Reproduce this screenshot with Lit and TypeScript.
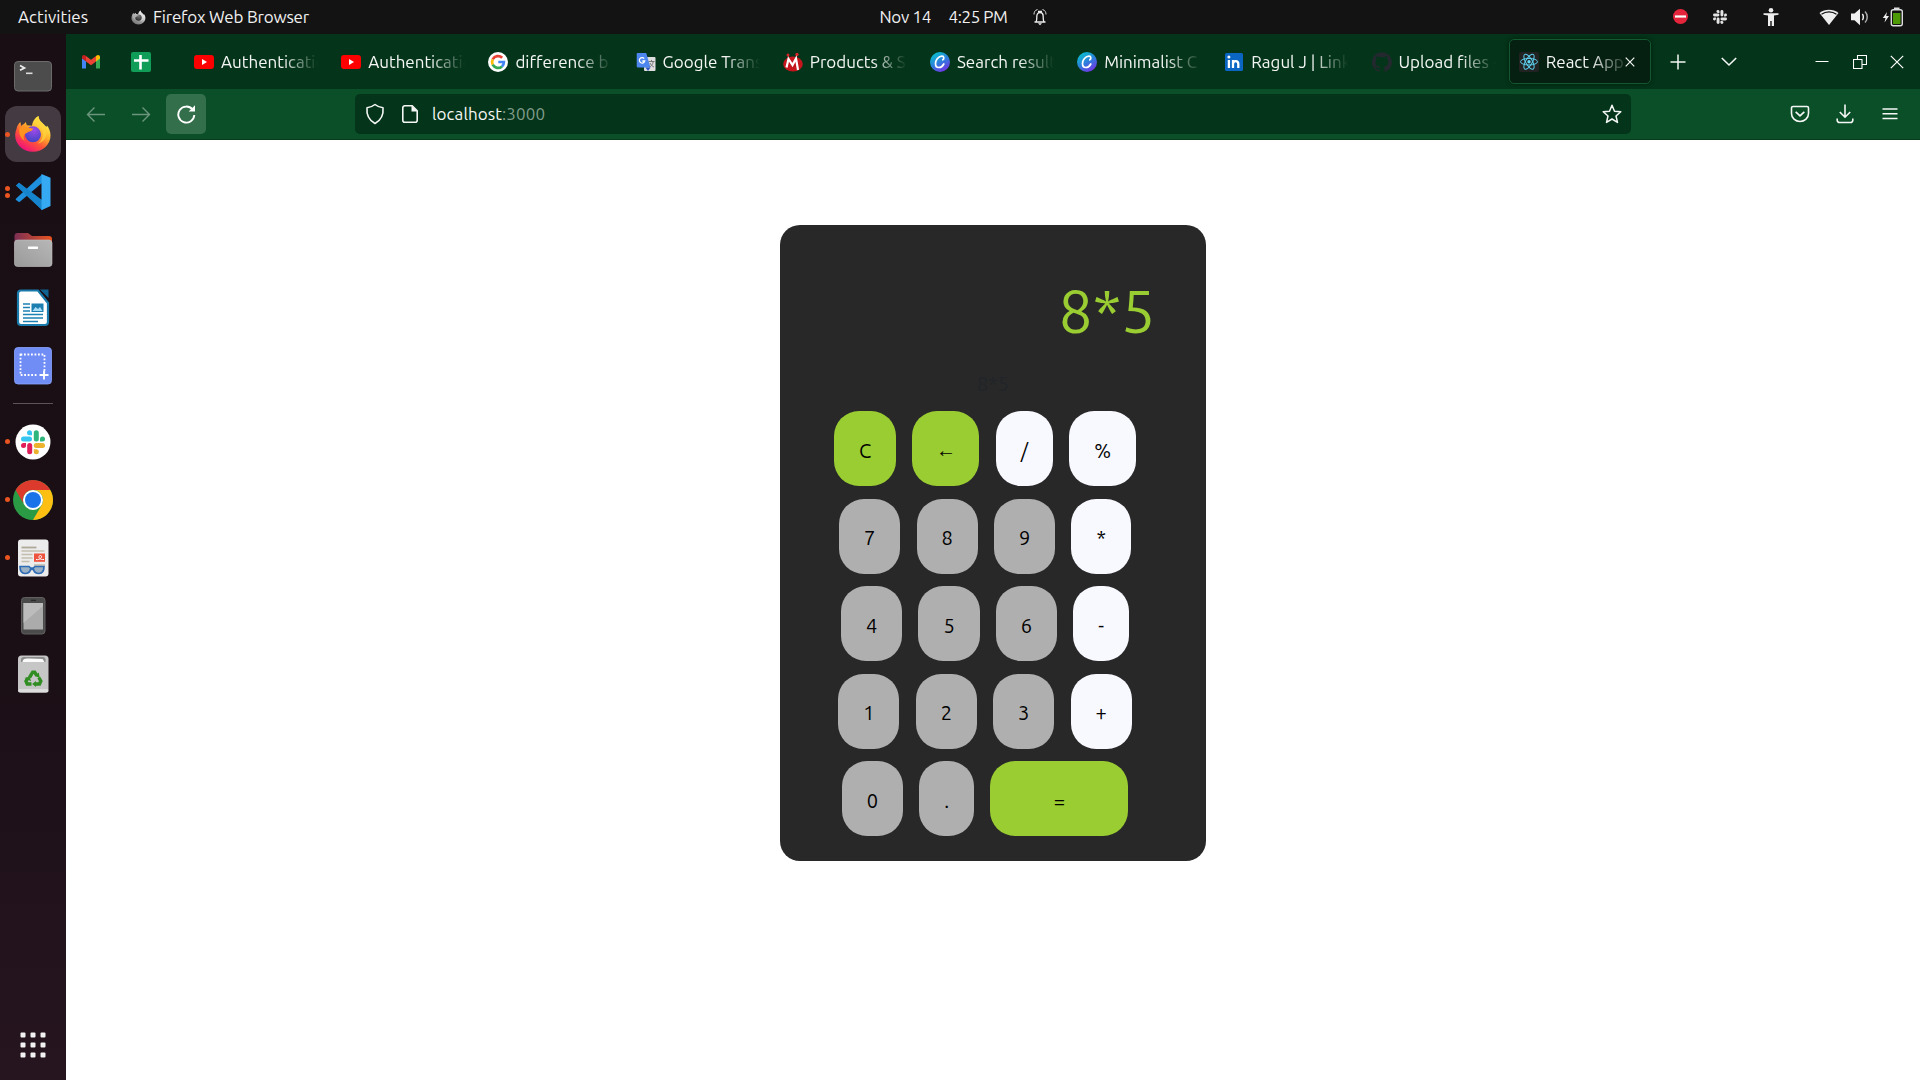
import { LitElement, html, svg, css } from "lit";
import { customElement, property, state } from "lit/decorators.js";
import { classMap } from "lit/directives/class-map.js";

/** Wraps drawing code in an inline SVG of the given size. */
const icon = (w: number, h: number, body: unknown) =>
  html`<svg width=${w} height=${h} viewBox="0 0 ${w} ${h}" fill="none">${body}</svg>`;

const slackShape = (a: string, b: string, c: string, d: string) => svg`
  <g fill=${a}><rect x="0" y="6.2" width="11" height="5" rx="2.5"/><path d="M11 5H8.5A2.5 2.5 0 1 1 11 2.5z"/></g>
  <g fill=${b}><rect x="12.8" y="0" width="5" height="11.2" rx="2.5"/><path d="M19 11.2V8.7A2.5 2.5 0 1 1 21.5 11.2z"/></g>
  <g fill=${c}><rect x="12.8" y="12.8" width="11.2" height="5" rx="2.5"/><path d="M12.8 19h2.5A2.5 2.5 0 1 1 12.8 21.5z"/></g>
  <g fill=${d}><rect x="6.2" y="12.8" width="5" height="11.2" rx="2.5"/><path d="M5 12.8v2.5A2.5 2.5 0 1 1 2.5 12.8z"/></g>`;

const foxBody = (grey: boolean) => svg`
  <defs>
    <linearGradient id="fxa" x1="28" y1="5" x2="9" y2="34" gradientUnits="userSpaceOnUse">
      <stop offset="0" stop-color=${grey ? "#fff" : "#fff44f"}/><stop offset=".35" stop-color=${grey ? "#ccc" : "#ffb02a"}/>
      <stop offset=".65" stop-color=${grey ? "#999" : "#ff5338"}/><stop offset="1" stop-color=${grey ? "#777" : "#f0127a"}/>
    </linearGradient>
    <radialGradient id="fxb" cx="20" cy="15" r="11" gradientUnits="userSpaceOnUse">
      <stop offset="0" stop-color=${grey ? "#777" : "#a04ae8"}/><stop offset="1" stop-color=${grey ? "#333" : "#4a44c8"}/>
    </radialGradient>
  </defs>
  <path fill="url(#fxa)" d="M2.5 14C3 11 4.500 8.500 6.500 7l.6 4C8 10 9 9.300 10 9l1.800-2 1 3.200 5.200.6C18.500 7 20.500 3 24.500 1c.3 2.500 1 4.500 3.500 6.500l4.500 4.500.5-1.500c2 2.500 3.500 6 3.500 10C36.500 29.500 29 36.800 19 36.800S1.200 29.500 1.200 20.500c0-2.300.4-4.500 1.300-6.500z"/>
  <circle cx="19" cy="19.300" r="8" fill="url(#fxb)"/>
  <path fill=${grey ? "#aaa" : "#ff9420"} d="M5.500 13.200C8 11.200 11 11 13 12.600l5.800.9c.4 1.300-1.500 2.700-4.200 3.200-1.300 1-3 1.600-4 2.600-1.500 2-1.300 4.300.4 6.700C6 23 4.500 17.500 5.500 13.200z"/>
  <path fill=${grey ? "#ddd" : "#ffd23c"} opacity=".75" d="M24.500 1c-3 2-4.300 5.500-3.500 8.500 3.500.7 7 3.500 7.800 8 .7 5-1.800 9-5.300 11 6-1 9.800-6 9-13-1-6-7.500-8-8-14.500z"/>`;

const dockIcons: Record<string, unknown> = {
  terminal: icon(40, 40, svg`<rect x="1.500" y="5.500" width="37" height="29.500" rx="3.500" fill="#4c4c4c" stroke="#6b6b6b"/>
    <path d="m7 9.500 4.500 2.400L7 14.300" stroke="#eee" stroke-width="1.700"/><path d="M13 17.300h6.500" stroke="#ddd" stroke-width="1.600"/>`),
  firefox: icon(38, 38, foxBody(false)),
  code: icon(38, 38, svg`<path d="M2 12.500 5 9.800 28 29v8z" fill="#1577b8"/><path d="M1.600 26 28 1.500V10L5.300 29.300 2 27z" fill="#1e8fdc"/>
    <path d="M2 12.500 5 9.800 28 27v10z" fill="#1684cc"/><path d="m27.500 1 9 3.800V33l-9 4.200z" fill="#35a9f2"/>`),
  files: icon(40, 40, svg`<defs><linearGradient id="fl" x1="0" x2="1"><stop stop-color="#7c2f55"/><stop offset="1" stop-color="#e95420"/></linearGradient>
    <linearGradient id="fg" x1="0" y1="1" x2="1" y2="0"><stop stop-color="#9a9a9a"/><stop offset="1" stop-color="#b7b7b7"/></linearGradient></defs>
    <path d="M1.500 6a3 3 0 0 1 3-3h10.500l4 3H36a3 3 0 0 1 3 3v12H1.500z" fill="url(#fl)"/>
    <rect x="1.500" y="10" width="37.500" height="26.500" rx="3" fill="url(#fg)" stroke="#c2c2c2" stroke-width=".6"/><rect x="15" y="16.500" width="10" height="2.400" rx=".6" fill="#fff"/>`),
  writer: icon(40, 40, svg`<path d="M8 2.500h17L35 15v19a3 3 0 0 1-3 3H8a3 3 0 0 1-3-3V5.500a3 3 0 0 1 3-3z" fill="#fff" stroke="#187bab" stroke-width="2.200"/>
    <path d="M27 1.500h8.500V10z" fill="#0f6390"/>
    <path d="M10 16h7M10 19.500h7M10 23h7M10 26.500h20M10 30h20M10 33.500h15" stroke="#1d82b3" stroke-width="1.600"/><rect x="18.500" y="15.500" width="12" height="8.500" fill="#1c7fb0"/>
    <path d="m19.500 23 3-4 2.500 2 2-2 2.500 4z" fill="#a6dbf5"/>`),
  shot: icon(40, 40, svg`<rect x="1.500" y="1.500" width="37" height="36.500" rx="3.500" fill="#6f8df5" stroke="#8aa3ff" stroke-width=".8"/>
    <rect x="7.500" y="8.500" width="24" height="20.500" stroke="#fff" stroke-width="1.800" stroke-dasharray="1.800 1.700"/><path d="M25 29h12" stroke="#6f8df5" stroke-width="4"/>
    <path d="M31 24.500v9M26.500 29h9" stroke="#fff" stroke-width="1.800"/>`),
  slack: icon(36, 36, svg`<circle cx="18" cy="18" r="17.500" fill="#fff"/><g transform="translate(6 6.300)">${slackShape("#36c5f0", "#2eb67d", "#ecb22e", "#e01e5a")}</g>`),
  chrome: icon(40, 40, svg`<circle cx="20" cy="20" r="20" fill="#2b9a44"/><path d="M2.700 10A20 20 0 0 1 37.300 10H20a10 10 0 0 0-8.700 15z" fill="#dc3a2c"/>
    <path d="M37.300 10A20 20 0 0 1 20 40l8.700-15A10 10 0 0 0 20 10z" fill="#fdbf12"/><circle cx="20" cy="20" r="10" fill="#fff"/><circle cx="20" cy="20" r="8" fill="#1a73e8"/>`),
  reader: icon(40, 40, svg`<rect x="5" y="1.500" width="30.500" height="37" rx="3" fill="#ececec"/><path d="M8.500 9.500h15" stroke="#b0a99a" stroke-width="1.800"/>
    <path d="M8.500 13h23M8.500 16.500h11M8.500 20h11M8.500 23.500h8M21 27h11" stroke="#c4bdad" stroke-width="1.400"/><rect x="21" y="15.500" width="11" height="8.300" fill="#ee5340"/>
    <path d="M23 21.500c5 1 7-4 4.500-4s-2.500 4.500 3.500 4" stroke="#fff"/>
    <path d="M7 28.500h9l1.500 1.500h3l1.500-1.500h9c0 5-1.500 7-5 7s-5-2-5.500-4h-3c-.5 2-2 4-5.500 4s-5-2-5-7z" fill="#9ab0c4" stroke="#2f6cb5" stroke-width="1.700"/>`),
  phone: icon(40, 40, svg`<rect x="8.500" y="1.500" width="23.500" height="36.500" rx="3" fill="#4a4a4a" stroke="#606060"/><rect x="10.500" y="7" width="19.500" height="26.500" fill="#ababab"/>
    <path d="M10.500 27 30 10v-3H10.500z" fill="#bcbcbc"/><path d="M18 4.300h5" stroke="#222"/>`),
  trash: icon(40, 40, svg`<rect x="5" y="1.500" width="30.500" height="37" rx="3.500" fill="#c6c6c6"/><rect x="5" y="35" width="30.500" height="3.500" rx="1.700" fill="#dcdcdc"/>
    <path d="M8 8V5.500A2.500 2.500 0 0 1 10.500 3H30a2.500 2.500 0 0 1 2.500 2.500V8z" fill="#8d8d8d"/><path d="M9.500 8c0-3 3-4 6-3.500l14 .5 2 3z" fill="#fafafa"/>
    <g fill="none" stroke="#2f8d22" stroke-width="3.400"><path d="m16.500 23.500 3.200-5.300h2l2 3.300"/><path d="m25.800 23.500 2 3.500-1.300 3h-4.500"/><path d="M18.500 30h-4.300l-1.200-2.800 1.700-2.700"/></g>
    <g fill="#2f8d22"><path d="m25.800 18.500 1 5.500-5-2z"/><path d="m23 27 .1 6-4-3z"/><path d="m11.500 24 5-1.500 1.500 4.700z"/></g>`),
  apps: icon(40, 40, svg`<g fill="#f2f2f2">${[7.5, 17.5, 27.5].map((y) => [7.5, 17.5, 27.5].map((x) => svg`<rect x=${x} y=${y} width="5" height="5" rx="1"/>`))}</g>`),
};

const canva = icon(20, 20, svg`<defs><linearGradient id="cv" x1=".2" y1="0" x2=".8" y2="1"><stop stop-color="#06c4cc"/><stop offset=".5" stop-color="#2d7fdc"/><stop offset="1" stop-color="#7d2ae7"/></linearGradient></defs>
  <circle cx="10" cy="10" r="10" fill="url(#cv)"/><path d="M12.800 7.800c1.400-.6 1.600-3.600-.8-3.600C8.500 4.200 5.500 8 5.500 11.500c0 2.500 1.300 4 3.300 4 2.200 0 4-1.500 5-3.500" stroke="#fff" stroke-width="1.700" stroke-linecap="round"/>`);

const youtube = icon(20, 20, svg`<rect x="0" y="3" width="20" height="14" rx="3" fill="#f00"/><path d="m8 7 5 3-5 3z" fill="#fff"/>`);

const favicons: Record<string, unknown> = {
  gmail: icon(20, 20, svg`<path d="M1 5v11.500h4V9z" fill="#4285f4"/><path d="M19 5v11.500h-4V9z" fill="#34a853"/><path d="M1 5c0-2 2-2.600 3.400-1.500L5 4v5.500L1 6.500z" fill="#c5221f"/>
    <path d="M19 5c0-2-2-2.600-3.400-1.500L15 4v5.500l4-3z" fill="#fbbc04"/><path d="M5 4v5.500l5 3.800 5-3.800V4l-5 3.800z" fill="#ea4335"/>`),
  sheets: icon(20, 20, svg`<rect width="20" height="20" rx="2" fill="#0f9d58"/><path d="M9.500 3v14.500M3 8.500h14.500" stroke="#fff" stroke-width="2.600"/>`),
  youtube,
  google: icon(20, 20, svg`<circle cx="10" cy="10" r="10" fill="#fff"/><g stroke-width="2.700"><path d="M14.200 5.800A6 6 0 0 0 4.700 7.300" stroke="#ea4335"/><path d="M4.700 7.300a6 6 0 0 0 0 5.400" stroke="#fbbc05"/>
    <path d="M4.700 12.700a6 6 0 0 0 9.300 1.700" stroke="#34a853"/><path d="M14 14.400a6 6 0 0 0 1.900-4.400H10.300" stroke="#4285f4"/></g>`),
  translate: icon(20, 20, svg`<rect x="8" y="5" width="11.500" height="14" rx="1" fill="#dedede"/><path d="M1.500 1h8.700l4.300 14.500H2A1.300 1.300 0 0 1 .7 14.200V2A1 1 0 0 1 1.500 1z" fill="#4c86ee"/>
    <path d="m9.500 15.500h5L12 19z" fill="#2a56c6"/><path d="M8.200 6.700A2.700 2.700 0 1 0 8.700 9H6.300" stroke="#fff" stroke-width="1.300"/><path d="M12.500 9.500h6M15.500 8v1.500M17.300 9.500c-.5 3-2.500 5-4 5.700M14 11c1 2 2.500 3.500 4 4" stroke="#777"/>`),
  products: icon(20, 20, svg`<circle cx="5" cy="3" r="1.500" fill="#d8232a"/><circle cx="14" cy="2.500" r="1.700" fill="#d8232a"/><path d="M5 3.500 7 7M14 3l-2 4" stroke="#c22" />
    <ellipse cx="10" cy="12" rx="9.800" ry="7.400" fill="#c4161c"/><path d="M3.500 15.500 5.500 7l4 6 3.500-6.500L15 18" stroke="#fff" stroke-width="2.200"/>`),
  canva,
  linkedin: icon(20, 20, svg`<rect x="1" y="1" width="18" height="18" rx="1.500" fill="#0a66c2"/><path d="M4.900 8v8M9 16V8m0 4c0-3.800 5.300-3.800 5.300 0v4" stroke="#fff" stroke-width="2.300"/><circle cx="4.900" cy="5" r="1.500" fill="#fff"/>`),
  github: icon(20, 20, svg`<path fill="#24292f" d="M10 .2a10 10 0 0 0-3.200 19.500c.5.1.7-.2.7-.5v-1.700c-2.800.6-3.400-1.300-3.400-1.300-.4-1.200-1.100-1.500-1.100-1.500-.9-.6.1-.6.1-.6 1 .1 1.500 1 1.500 1 .9 1.600 2.400 1.100 2.900.9.1-.7.4-1.100.6-1.400-2.200-.2-4.500-1.100-4.500-4.900 0-1.100.4-2 1-2.700-.1-.2-.4-1.200.1-2.600 0 0 .8-.3 2.700 1a9.400 9.400 0 0 1 5 0c1.900-1.300 2.700-1 2.700-1 .5 1.400.2 2.400.1 2.600.6.700 1 1.600 1 2.700 0 3.800-2.300 4.700-4.500 4.900.4.300.7.900.7 1.900v2.700c0 .3.200.6.700.5A10 10 0 0 0 10 .2z"/>`),
  react: icon(20, 20, svg`<rect width="20" height="20" rx="2" fill="#222"/><g stroke="#5ccfee" stroke-width="1"><ellipse cx="10" cy="9.700" rx="8.500" ry="3.300"/><ellipse cx="10" cy="9.700" rx="8.500" ry="3.300" transform="rotate(60 10 9.700)"/><ellipse cx="10" cy="9.700" rx="8.500" ry="3.300" transform="rotate(120 10 9.700)"/></g><circle cx="10" cy="9.700" r="1.700" fill="#61dafb"/>`),
};

@customElement("system-bar")
class SystemBar extends LitElement {
  static styles = css`
    :host { display: flex; height: 34px; background: #131313; color: #f0f0f0; font-size: 17px; line-height: 34px; align-items: center; }
    svg { display: block; flex: none; }
    .left { flex: 1 1 0; display: flex; align-items: center; padding-left: 18px; }
    .activities { width: 113px; letter-spacing: 0.05px; }
    .app { margin-left: 7px; letter-spacing: -0.2px; }
    .clock { display: flex; align-items: center; white-space: pre; }
    .date { width: 69px; letter-spacing: -0.3px; }
    .time { width: 84px; letter-spacing: -0.4px; }
    .status { flex: 1 1 0; display: flex; align-items: center; justify-content: flex-end; padding-right: 12px; }
    .cell { width: 30px; height: 34px; display: flex; align-items: center; justify-content: center; }
    .cell.dnd { margin-right: 10px; }
    .cell.slack { margin-right: 21px; }
    .cell.access { margin-right: 28px; }
    .cell.volume { margin: 0 3px 0 1px; }
  `;
  render() {
    return html`
      <div class="left">
        <span class="activities">Activities</span>
        <svg width="15" height="15" viewBox="0 0 38 38">${foxBody(true)}</svg>
        <span class="app">Firefox Web Browser</span>
      </div>
      <div class="clock">
        <span class="date">Nov 14</span><span class="time">4:25 PM</span>
        ${icon(14, 18, svg`<path d="M1.500 14h11M3 14c1-2 .8-3 .8-5.500C3.800 6 5 4.500 7 4.500s3.200 1.500 3.200 4c0 2.500-.2 3.500.8 5.500" stroke="#eee" stroke-width="1.300"/><path d="M5 15.300h4L7 17.300zM5 2.800h4v1.500H5z" fill="#eee"/><path d="M4.500 1.500C2 2.200 1 4 1 6.500M9.500 1.500C12 2.200 13 4 13 6.500" stroke="#ddd"/>`)}
      </div>
      <div class="status">
        <span class="cell dnd">${icon(16, 16, svg`<circle cx="8.500" cy="7.500" r="7.500" fill="#e5253c"/><path d="M3 7.500h11" stroke="#fff" stroke-width="2.200"/>`)}</span>
        <span class="cell slack"><svg width="14" height="14" viewBox="0 0 24 24">${slackShape("#e4e4e4", "#e4e4e4", "#e4e4e4", "#e4e4e4")}</svg></span>
        <span class="cell access">${icon(16, 18, svg`<circle cx="8" cy="2.300" r="2.300" fill="#eee"/><path d="M.5 5.200h15v1.600L11 7.500V18H8.700v-5H7.300v5H5V7.500L.5 6.800z" fill="#eee"/>`)}</span>
        <span class="cell">${icon(20, 18, svg`<path d="M10 17 .5 5C6 .7 14 .7 19.500 5z" fill="#eee"/><path d="M2.500 6.300C7 3 13 3 17.500 6.300" stroke="#131313" stroke-width="1.300"/>`)}</span>
        <span class="cell volume">${icon(20, 18, svg`<path d="M1 5.500h3.500L10 .8v16.400l-5.500-5H1z" fill="#eee"/><path d="M12.300 6c1.400 1.500 1.400 4.500 0 6" stroke="#eee" stroke-width="1.500"/><path d="M15 3.500c3 3 3 8 0 11" stroke="#aaa" stroke-width="1.500"/>`)}</span>
        <span class="cell">${icon(22, 20, svg`<path d="M5 5 .8 11h2.700L2.500 15.500 7 9H4.200z" fill="#eee"/><rect x="9.300" y="2.700" width="11" height="16" rx="2" stroke="#ddd" stroke-width="1.400"/><path d="M12 .5h5.500v1.500H12z" fill="#ddd"/><path d="M11 6h7.500v11H11z" fill="#4e9a06"/>`)}</span>
      </div>`;
  }
}

interface DockItem { id: string; dots: number; active?: boolean }

@customElement("app-dock")
class AppDock extends LitElement {
  static styles = css`
    :host { display: flex; flex-direction: column; align-items: center; gap: 2px; width: 66px; flex: none; box-sizing: border-box; padding: 14px 0 7px; background: linear-gradient(#190e14, #1b0f16 60%, #26151f); }
    svg { display: block; }
    .item { width: 56px; height: 56px; border-radius: 12px; display: flex; align-items: center; justify-content: center; position: relative; }
    .active { background: #443a41; }
    .dots { position: absolute; left: 0; top: 0; height: 56px; display: flex; flex-direction: column; justify-content: center; gap: 2.500px; }
    .dot { width: 5px; height: 5px; border-radius: 50%; background: #e95420; }
    .rule { width: 40px; height: 1px; background: #5c5358; margin: 7px 0 7.500px; }
    .grow { flex: 1; }
  `;
  pinned: DockItem[] = [
    { id: "terminal", dots: 0 }, { id: "firefox", dots: 1, active: true }, { id: "code", dots: 2 },
    { id: "files", dots: 0 }, { id: "writer", dots: 0 }, { id: "shot", dots: 0 },
  ];
  running: DockItem[] = [
    { id: "slack", dots: 1 }, { id: "chrome", dots: 1 }, { id: "reader", dots: 1 }, { id: "phone", dots: 0 }, { id: "trash", dots: 0 },
  ];
  item(i: DockItem) {
    return html`<div class=${classMap({ item: true, active: !!i.active })}>
      <span class="dots">${Array.from({ length: i.dots }, () => html`<i class="dot"></i>`)}</span>${dockIcons[i.id]}</div>`;
  }
  render() {
    return html`${this.pinned.map((i) => this.item(i))}<div class="rule"></div>${this.running.map((i) => this.item(i))}
      <div class="grow"></div>${this.item({ id: "apps", dots: 0 })}`;
  }
}

@customElement("browser-chrome")
class BrowserChrome extends LitElement {
  static styles = css`
    :host { display: block; color: #f4f7f5; font-size: 17px; }
    svg { display: block; flex: none; }
    .tabs { height: 55px; background: #043419; display: flex; align-items: center; }
    .pinned { width: 50px; display: flex; justify-content: center; flex: none; }
    .list { display: flex; margin-left: 18px; }
    .tab { width: 147.200px; height: 45px; box-sizing: border-box; padding-left: 10px; display: flex; align-items: center; gap: 7px; flex: none; }
    .tab.on { width: 142px; padding-left: 9px; border: 1px solid #135831; border-radius: 5px; background: #051f11; box-shadow: 0 0 4px rgba(0, 0, 0, 0.4); }
    .label { width: 97px; overflow: hidden; white-space: nowrap; line-height: 28px; -webkit-mask-image: linear-gradient(to right, #000 62px, transparent 97px); mask-image: linear-gradient(to right, #000 62px, transparent 97px); }
    .on .label { width: 79px; -webkit-mask-image: linear-gradient(to right, #000 44px, transparent 84px); mask-image: linear-gradient(to right, #000 44px, transparent 84px); }
    .on .x { margin-left: -7px; }
    .cell { display: flex; align-items: center; justify-content: center; height: 55px; }
    .plus { width: 50px; margin-left: 2px; }
    .chev { width: 52px; }
    .controls { margin-left: auto; display: flex; padding-right: 4px; }
    .ctl { width: 37.500px; }
    .bar { height: 50px; background: #0a4f28; border-bottom: 1px solid #063d1d; box-sizing: border-box; height: 51px; display: flex; align-items: center; padding: 0 10px; gap: 5px; }
    .btn { width: 40px; height: 40px; border-radius: 5px; display: flex; align-items: center; justify-content: center; flex: none; }
    .btn.hover { background: #336f4b; }
    .url { margin-left: 144px; width: 1276px; height: 40px; box-sizing: border-box; border-radius: 5px; background: #043419; display: flex; align-items: center; padding: 0 9px 0 10px; }
    .page { margin: 0 12px 0 15px; }
    .host { flex: 1; line-height: 40px; letter-spacing: 0.100px; }
    .port { color: #809c8b; }
    .tools { margin-left: auto; display: flex; gap: 5px; }
  `;
  tabs = [
    ["youtube", "Authentication"], ["youtube", "Authentication"], ["google", "difference b"], ["translate", "Google Trans"],
    ["products", "Products & S"], ["canva", "Search result"], ["canva", "Minimalist C"], ["linkedin", "Ragul J | Link"], ["github", "Upload files ·"],
  ];
  render() {
    const w = "#f4f7f5";
    return html`
      <div class="tabs">
        <span class="pinned">${favicons.gmail}</span><span class="pinned">${favicons.sheets}</span>
        <div class="list">
          ${this.tabs.map(([f, t]) => html`<div class="tab">${favicons[f]}<span class="label">${t}</span></div>`)}
          <div class="tab on">${favicons.react}<span class="label">React App</span><span class="x">${icon(10, 10, svg`<path d="m.7.7 8.600 8.600M9.300.7.7 9.300" stroke=${w} stroke-width="1.200"/>`)}</span></div>
        </div>
        <span class="cell plus">${icon(16, 16, svg`<path d="M8 .5v15M.5 8h15" stroke=${w} stroke-width="1.500"/>`)}</span>
        <span class="cell chev">${icon(16, 12, svg`<path d="m.8 2 7.200 7 7.200-7" stroke=${w} stroke-width="1.600"/>`)}</span>
        <div class="controls">
          <span class="cell ctl">${icon(14, 14, svg`<path d="M.5 6.500h13" stroke="#fff"/>`)}</span>
          <span class="cell ctl">${icon(14, 14, svg`<path d="M.5 4.500h8.500v9H.5zM4.500 4.500v-4h9v9H9" stroke="#fff" stroke-width="1.100"/>`)}</span>
          <span class="cell ctl">${icon(14, 14, svg`<path d="m.8.8 12.400 12.400M13.200.8.8 13.200" stroke="#fff" stroke-width="1.200"/>`)}</span>
        </div>
      </div>
      <div class="bar">
        <span class="btn">${icon(20, 20, svg`<path d="M19 10.500H2M8.500 3.500l-7 7 7 7" stroke="#6c957d" stroke-width="1.400"/>`)}</span>
        <span class="btn">${icon(20, 20, svg`<path d="M1 10.500h17M11.500 3.500l7 7-7 7" stroke="#6c957d" stroke-width="1.400"/>`)}</span>
        <span class="btn hover">${icon(20, 20, svg`<path d="M16.500 5.500A8 8 0 1 0 18.300 11" stroke="#fff" stroke-width="1.900"/><path d="M19 1.300v6.200h-6.300z" fill="#fff"/>`)}</span>
        <div class="url">
          ${icon(20, 22, svg`<path d="M10 1.500c2.500 2 5 3 8 3.300.6 6-1.500 12-8 15.700C3.500 16.800 1.400 10.800 2 4.800c3-.3 5.500-1.300 8-3.300z" stroke=${w} stroke-width="1.600" stroke-linejoin="round"/>`)}
          <span class="page">${icon(20, 20, svg`<path d="M4.800 1.800h7.400l5 5v9.400a2 2 0 0 1-2 2H4.800a2 2 0 0 1-2-2V3.800a2 2 0 0 1 2-2z" stroke=${w} stroke-width="1.600"/><path d="M11.500 1.500v6h6z" fill=${w}/>`)}</span>
          <span class="host">localhost<span class="port">:3000</span></span>
          ${icon(20, 20, svg`<path d="m10 1.300 2.500 5.900 6.300.6-4.800 4.200 1.500 6.400L10 15l-5.500 3.400L6 12 1.200 7.800l6.300-.6z" stroke=${w} stroke-width="1.500" stroke-linejoin="round"/>`)}
        </div>
        <div class="tools">
          <span class="btn">${icon(20, 18, svg`<path d="M3 1.500h14a1.500 1.500 0 0 1 1.500 1.500v5.500a8.500 8 0 0 1-17 0V3A1.500 1.500 0 0 1 3 1.500z" stroke=${w} stroke-width="1.600"/><path d="m5.700 6.800 4.300 4 4.300-4" stroke=${w} stroke-width="1.700"/>`)}</span>
          <span class="btn">${icon(18, 20, svg`<path d="M9 .5v12.500M3.800 8 9 13.200 14.200 8M1.200 14.500v1.700a2.300 2.300 0 0 0 2.300 2.300h11a2.300 2.300 0 0 0 2.300-2.300v-1.700" stroke=${w} stroke-width="1.600"/>`)}</span>
          <span class="btn">${icon(16, 14, svg`<path d="M.5 2h15M.5 6.700h15M.5 11.500h15" stroke=${w} stroke-width="1.400"/>`)}</span>
        </div>
      </div>`;
  }
}

@customElement("calc-pad")
class CalcPad extends LitElement {
  static styles = css`
    :host { display: block; font-size: 20px; color: #212529; }
    .card { width: 426px; height: 636px; box-sizing: border-box; border-radius: 20px; background: #282828; display: flex; flex-direction: column; padding-right: 16px; }
    .display { color: yellowgreen; font-size: 60px; line-height: 90px; text-align: right; padding: 41px 35px 0 0; height: 144px; box-sizing: border-box; }
    .echo { padding-left: 16px; text-align: center; line-height: 30px; height: 42px; }
    .rows { display: flex; flex-direction: column; gap: 12.500px; }
    .row { display: flex; justify-content: center; gap: 16.200px; }
    .key { font: inherit; color: #000; border: 0; height: 75px; padding: 3px 25px 0; border-radius: 25px; background: #afafaf; flex: none; }
    .op { background: ghostwhite; }
    .accent { background: yellowgreen; }
    .back { padding-left: 0; padding-right: 0; width: 67px; }
    .wide { width: 138px; }
  `;
  @property() expression = "8*5";
  @state() rows: [string, string][][] = [
    [["C", "accent"], ["←", "accent back"], ["/", "op"], ["%", "op"]],
    [["7", ""], ["8", ""], ["9", ""], ["*", "op"]],
    [["4", ""], ["5", ""], ["6", ""], ["-", "op"]],
    [["1", ""], ["2", ""], ["3", ""], ["+", "op"]],
    [["0", ""], [".", ""], ["=", "accent wide"]],
  ];
  render() {
    return html`<div class="card">
      <div class="display">${this.expression}</div>
      <div class="echo">${this.expression}</div>
      <div class="rows">${this.rows.map((r) => html`<div class="row">${r.map(([k, c]) => html`<button class="key ${c}">${k}</button>`)}</div>`)}</div>
    </div>`;
  }
}

@customElement("app-root")
class AppRoot extends LitElement {
  static styles = css`
    :host { display: flex; flex-direction: column; width: 1920px; height: 1080px; overflow: hidden; background: #fff; font-family: Ubuntu, "Noto Sans", "Open Sans", sans-serif; }
    .desk { flex: 1; display: flex; min-height: 0; }
    .window { flex: 1; min-width: 0; }
    .viewport { display: flex; justify-content: center; padding-top: 85px; }
  `;
  render() {
    return html`<system-bar></system-bar>
      <div class="desk"><app-dock></app-dock>
        <div class="window"><browser-chrome></browser-chrome><div class="viewport"><calc-pad></calc-pad></div></div>
      </div>`;
  }
}
